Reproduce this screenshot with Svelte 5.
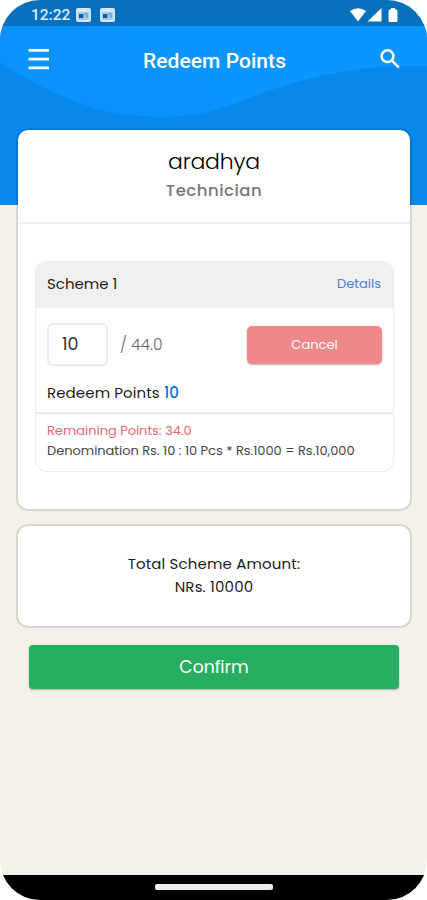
<script lang="ts">
  const user = { name: 'aradhya', role: 'Technician' };
  const scheme = { title: 'Scheme 1', available: 44, rate: 1000, denomination: 10 };

  let amount = $state('10');

  let remaining = $derived((scheme.available - Number(amount)).toFixed(1));
  let total = $derived(Number(amount) * scheme.rate);
</script>

<div class="screen">
  <div class="top">
    <svg class="waves" viewBox="0 0 427 179" preserveAspectRatio="none" aria-hidden="true">
      <rect width="427" height="179" fill="#0888ec" />
      <path d="M0 0H427V40C360 38 300 50 225 81C190 94 145 93 105 85C65 75 28 54 0 36Z" fill="#0a93fb" />
      <path d="M80 0H427V40C360 38 300 50 225 81C195 60 150 20 80 0Z" fill="#0b96fe" />
    </svg>

    <div class="status-bar">
      <span class="time">12:22</span>
      {#each [1, 2] as id (id)}
        <svg class="note" viewBox="0 0 15 14">
          <rect width="15" height="14" rx="2" fill="#d3e5f8" />
          <path d="M2 4H13V12H2Z" fill="#a3c9ec" />
          <path d="M3 6H7.500V10H3Z" fill="#0f5da8" />
          <path d="M8.500 5H11.500V10H10V6.500H8.500Z" fill="#5f9fd8" />
        </svg>
      {/each}
      <svg class="signals" viewBox="0 0 48 14">
        <path d="M0 3Q8 -2.5 16 3L8 13.5Z" />
        <path d="M31.500 0V13.500H17.500Z" />
        <path d="M41 0H45V1.500H46Q47.500 1.500 47.500 3V12.500Q47.500 14 46 14H40Q38.500 14 38.500 12.500V3Q38.500 1.500 40 1.500H41Z" />
      </svg>
    </div>

    <header class="app-bar">
      <button class="icon-btn" aria-label="Menu">
        <svg width="21" height="21" viewBox="0 0 21 21"><path d="M0.500 0H21V2.700H0.500ZM0.500 8.800H21V11.500H0.500ZM0.500 17.500H21V20.200H0.500Z" fill="#fff" /></svg>
      </button>
      <h1>Redeem Points</h1>
      <button class="icon-btn" aria-label="Search">
        <svg width="20" height="20" viewBox="0 0 20 20" fill="none" stroke="#fff" stroke-width="2.500"><circle cx="7.500" cy="7.200" r="5.900" /><path d="M11.700 11.400L18.800 18.600" /></svg>
      </button>
    </header>
  </div>

  <main>
    <section class="card">
      <div class="profile">
        <h2>{user.name}</h2>
        <p>{user.role}</p>
      </div>

      <div class="scheme">
        <div class="scheme-header">
          <span class="scheme-title">{scheme.title}</span>
          <a class="details" href="#details">Details</a>
        </div>
        <div class="scheme-body">
          <div class="entry">
            <input bind:value={amount} aria-label="Points" />
            <span class="available">/ {scheme.available.toFixed(1)}</span>
            <button class="cancel">Cancel</button>
          </div>
          <p class="redeem">Redeem Points <span>{amount}</span></p>
        </div>
        <div class="scheme-footer">
          <p class="remaining">Remaining Points: {remaining}</p>
          <p class="denomination">Denomination Rs. {scheme.denomination} : {amount} Pcs * Rs.{scheme.rate} = Rs.{total.toLocaleString('en-US')}</p>
        </div>
      </div>
    </section>

    <section class="card total">
      <p class="total-label">Total Scheme Amount:</p>
      <p class="total-value">NRs. {total}</p>
    </section>

    <button class="confirm">Confirm</button>
  </main>

  <div class="nav-bar"><div class="handle"></div></div>
</div>

<style>
  :global(body) {
    background: #fff;
  }

  * {
    box-sizing: border-box;
  }

  h1, h2, p {
    margin: 0;
    font-weight: 400;
  }

  button, input {
    font-family: inherit;
    border: 0;
    padding: 0;
  }

  .screen {
    width: 427px;
    height: 900px;
    display: flex;
    flex-direction: column;
    overflow: hidden;
    border-radius: 40px;
    background: #f4f1e9;
    font-family: Poppins, Inter, sans-serif;
    color: #1c1c1c;
  }

  .top {
    position: relative;
    height: 205px;
    flex: none;
  }

  .waves {
    position: absolute;
    top: 26px;
    left: 0;
    width: 100%;
    height: 179px;
  }

  .status-bar {
    position: relative;
    height: 26px;
    display: flex;
    align-items: center;
    padding: 3px 29px 0 31px;
    background: #0670bd;
    color: #dcecff;
  }

  .time {
    width: 45px;
    font: 500 15.5px/20px Roboto, sans-serif;
  }

  .note {
    width: 15px;
    height: 14px;
    margin-right: 9px;
  }

  .signals {
    width: 48px;
    height: 14px;
    margin-left: auto;
    fill: #fff;
  }

  .app-bar {
    position: relative;
    height: 66px;
    display: flex;
    align-items: center;
    justify-content: space-between;
    padding: 0 27px 0 28px;
  }

  .icon-btn {
    display: flex;
    background: none;
  }

  h1 {
    font: 500 21px/28px Roboto, sans-serif;
    letter-spacing: 0.05px;
    color: #fff;
    padding-top: 3px;
  }

  main {
    position: relative;
    flex: 1;
    display: flex;
    flex-direction: column;
    margin-top: -77px;
    padding: 0 15px 0 16px;
  }

  .card {
    border: 2px solid rgba(0, 0, 0, 0.11);
    border-radius: 12px;
    background: #fff;
    background-clip: padding-box;
    height: 383px;
    flex: none;
  }

  .profile {
    height: 94px;
    padding-top: 17px;
    border-bottom: 2px solid #efefef;
    text-align: center;
  }

  h2 {
    font-size: 22px;
    line-height: 30px;
    font-weight: 300;
    letter-spacing: -0.2px;
    color: #000;
  }

  .profile p {
    font-size: 16.5px;
    line-height: 27px;
    font-weight: 500;
    letter-spacing: 0.5px;
    color: #777;
  }

  .scheme {
    margin: 37px 16px 0 17px;
    height: 211px;
    border: 1px solid #ededed;
    border-radius: 11px;
    overflow: hidden;
  }

  .scheme-header {
    height: 46px;
    display: flex;
    align-items: center;
    justify-content: space-between;
    padding: 0 12px 3px 11px;
    background: #f0f0f0;
  }

  .scheme-title {
    font-size: 15px;
    line-height: 20px;
  }

  .details {
    font-size: 13px;
    line-height: 20px;
    color: #4c7ddf;
    text-decoration: none;
  }

  .scheme-body {
    height: 106px;
    padding: 15px 11px 0;
    border-bottom: 2px solid #eaeaea;
  }

  .entry {
    display: flex;
    align-items: center;
  }

  input {
    width: 61px;
    height: 43px;
    padding: 0 13px 2px;
    border: 2px solid #ebebeb;
    border-radius: 6px;
    font-size: 17.5px;
    color: #333;
    background: #fff;
  }

  .available {
    margin-left: 12px;
    font-size: 15.5px;
    font-weight: 300;
    color: #666;
  }

  .cancel {
    width: 135px;
    height: 38px;
    margin-left: auto;
    border-radius: 5px;
    background: #ef8888;
    box-shadow: 0 1px 2px rgba(0, 0, 0, 0.3);
    color: #fff;
    font-size: 13px;
  }

  .redeem {
    margin-top: 15px;
    font-size: 15px;
    line-height: 24px;
    letter-spacing: 0.1px;
  }

  .redeem span {
    color: #126ee0;
    font-weight: 500;
  }

  .scheme-footer {
    padding: 7px 11px;
    font-size: 13px;
    line-height: 20px;
    letter-spacing: -0.03px;
    white-space: nowrap;
  }

  .remaining {
    color: #ea6870;
  }

  .denomination {
    color: #444;
  }

  .total {
    height: 104px;
    margin-top: 13px;
    padding-top: 26px;
    font-size: 15px;
    line-height: 23px;
    letter-spacing: 0.15px;
    text-align: center;
  }

  .confirm {
    height: 44px;
    margin: 17px 13px 0;
    border-radius: 4px;
    background: #27ae60;
    box-shadow: 0 1px 2px rgba(0, 0, 0, 0.3);
    color: #fff;
    font-size: 17.2px;
  }

  .nav-bar {
    height: 25px;
    display: flex;
    justify-content: center;
    padding-top: 9px;
    background: #000;
  }

  .handle {
    width: 118px;
    height: 6px;
    border-radius: 2px;
    background: #eee;
  }
</style>
